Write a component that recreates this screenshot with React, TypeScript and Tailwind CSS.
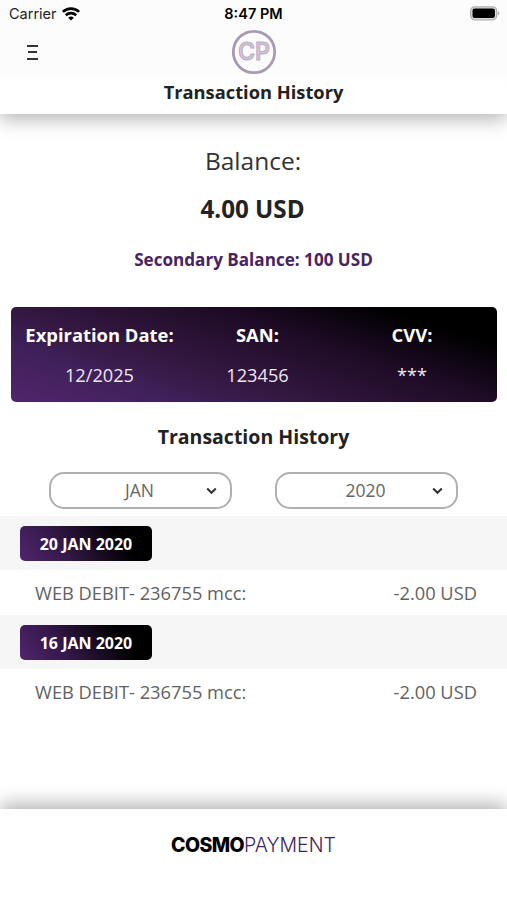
import React from 'react';

interface Transaction {
  date: string;
  label: string;
  amount: string;
}

const transactions: Transaction[] = [
  { date: '20 JAN 2020', label: 'WEB DEBIT- 236755 mcc:', amount: '-2.00 USD' },
  { date: '16 JAN 2020', label: 'WEB DEBIT- 236755 mcc:', amount: '-2.00 USD' },
];

const cardDetails = [
  { title: 'Expiration Date:', value: '12/2025' },
  { title: 'SAN:', value: '123456' },
  { title: 'CVV:', value: '***' },
];

const WifiIcon: React.FC = () => (
  <svg width="18" height="14" viewBox="0 0 18 14" fill="none" stroke="#000" strokeWidth="2.6">
    <path d="M0.9 4.9a11.6 11.6 0 0 1 16.2 0" />
    <path d="M3.8 8.2a7.5 7.5 0 0 1 10.4 0" />
    <path d="M9 13.6 6.2 10.8a4 4 0 0 1 5.6 0z" fill="#000" stroke="none" />
  </svg>
);

const BatteryIcon: React.FC = () => (
  <svg width="31" height="15" viewBox="0 0 31 15">
    <rect x="1.7" y="0.8" width="26" height="13" rx="4" fill="#ddd" stroke="#b0b0b0" strokeWidth="1.3" />
    <rect x="3.5" y="2.6" width="22.4" height="9.4" rx="2" fill="#000" />
    <path d="M28.9 5v4.6c1.9-.6 1.9-4 0-4.6z" fill="#b0b0b0" />
  </svg>
);

const Logo: React.FC = () => (
  <svg width="46" height="46" viewBox="0 0 46 46">
    <circle cx="23" cy="23" r="20.7" fill="none" stroke="#a99ab3" strokeWidth="2.8" />
    <text
      x="23"
      y="31.4"
      textAnchor="middle"
      textLength="32"
      lengthAdjust="spacingAndGlyphs"
      fontSize="24"
      fontWeight="600"
      fill="#cfc5d5"
      stroke="#b9abc1"
      strokeWidth="0.9"
      className="font-['Inter',sans-serif]"
    >
      CP
    </text>
  </svg>
);

const Select: React.FC<{ value: string }> = ({ value }) => (
  <button className="flex h-[37px] w-[183px] items-center rounded-[15px] border-2 border-[#b0b0b0] bg-white pr-[13px]">
    <span className="flex-1 pl-[22px] text-center text-[17.5px] text-[#666]">{value}</span>
    <svg width="11" height="8" viewBox="0 0 11 8" fill="none" stroke="#333" strokeWidth="2">
      <path d="M1.2 1.5 5.5 5.8 9.8 1.5" />
    </svg>
  </button>
);

const App: React.FC = () => {
  return (
    <div className="flex h-[900px] w-[507px] flex-col overflow-hidden bg-white font-['Open_Sans',sans-serif] text-[#222]">
      {/* Header */}
      <header className="z-10 flex h-[114px] shrink-0 flex-col bg-linear-to-b from-[#fcfcfc] from-60% to-white to-75% shadow-[0_5px_18px_rgba(0,0,0,0.3)]">
        <div className="grid h-[27px] grid-cols-3 items-center pr-[7px] pl-[9px] font-['Inter',sans-serif] text-black">
          <div className="flex items-center gap-[6px] pt-px text-[14.5px] text-[#222]">
            <span className="w-[47px] whitespace-nowrap">Carrier</span>
            <WifiIcon />
          </div>
          <div className="pt-px pr-[2px] text-center text-[14.5px] font-semibold">8:47 PM</div>
          <div className="flex justify-end">
            <BatteryIcon />
          </div>
        </div>
        <div className="grid h-[50px] grid-cols-3 items-center">
          <div className="ml-[27px] flex w-[11px] flex-col items-center gap-[4.5px]">
            <span className="h-[2px] w-[11px] bg-[#333]" />
            <span className="h-[2px] w-[9px] bg-[#333]" />
            <span className="h-[2px] w-[11px] bg-[#333]" />
          </div>
          <div className="flex justify-center">
            <Logo />
          </div>
        </div>
        <h1 className="text-center text-[18.3px] leading-[30px] font-bold">Transaction History</h1>
      </header>

      <main className="flex flex-1 flex-col">
        <section className="flex flex-col items-center pt-[28px]">
          <div className="pr-[1px] text-[24.5px] leading-[38px] text-[#333]">Balance:</div>
          <div className="mt-[10px] pr-[2px] text-[24.2px] leading-[38px] font-bold">4.00 USD</div>
          <div className="mt-[18px] text-[17.1px] leading-[28px] font-bold text-[#482463]">
            Secondary Balance: 100 USD
          </div>
        </section>

        {/* Card details */}
        <section className="mt-[33px] mr-[10px] ml-[11px] grid h-[95px] grid-cols-[177px_139px_170px] rounded-[5px] bg-linear-[18deg,#50256c_0%,#40205a_22%,#33173f_38%,#1e0b26_63%,#000_85%] text-center text-white">
          {cardDetails.map((item) => (
            <div key={item.title} className="flex flex-col pt-[13px]">
              <span className="text-[18.4px] leading-[30px] font-bold">{item.title}</span>
              <span className="mt-[10px] text-[18.2px] leading-[30px] text-[#eee6f2]">{item.value}</span>
            </div>
          ))}
        </section>

        <h2 className="mt-[20px] text-center text-[19.5px] leading-[30px] font-bold">Transaction History</h2>

        <div className="mt-[20px] flex justify-center gap-[43px]">
          <Select value="JAN" />
          <Select value="2020" />
        </div>

        {/* Transactions grouped by day */}
        <div className="mt-[7px]">
          {transactions.map((item) => (
            <div key={item.date}>
              <div className="flex h-[54px] items-center bg-[#f6f6f6] pl-5">
                <span className="flex h-[35px] w-[132px] items-center justify-center rounded-[5px] bg-linear-[55deg,#50256c_0%,#34184a_32%,#000_75%] pt-px text-[16px] font-bold text-white">
                  {item.date}
                </span>
              </div>
              <div className="flex h-[45px] items-center justify-between pt-px pr-[30px] pl-[35px] text-[18.3px] text-[#626262]">
                <span>{item.label}</span>
                <span>{item.amount}</span>
              </div>
            </div>
          ))}
        </div>
      </main>

      <footer className="flex h-[91px] shrink-0 items-start justify-center bg-white pt-[20px] shadow-[0_-5px_18px_rgba(0,0,0,0.3)]">
        <div className="flex text-[19.5px] leading-[32px]">
          <span className="font-['Inter',sans-serif] font-extrabold tracking-[-0.03em] text-black">COSMO</span>
          <span className="font-['Inter',sans-serif] font-light text-[#43215f]">PAYMENT</span>
        </div>
      </footer>
    </div>
  );
};

export default App;
